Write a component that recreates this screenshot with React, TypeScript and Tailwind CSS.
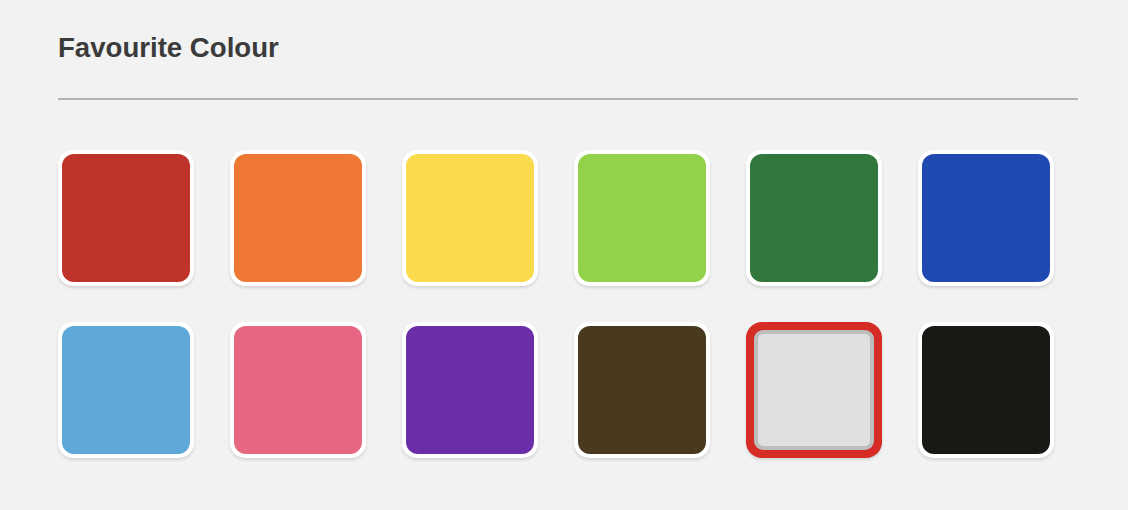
import React from 'react'

const colours = [
  '#c0332a', '#ef7834', '#fadb4e', '#92d14a', '#32783c', '#2149b2',
  '#5fa8da', '#e56781', '#6c2da8', '#49391f', '#e0e0e0', '#181915',
]

const App = () => {
  const selected = 10
  return (
    <div className="w-[1128px] h-[510px] bg-[#f2f2f2] px-[58px] pt-[30px]" style={{ fontFamily: '"Liberation Sans", Arial, sans-serif' }}>
      <h2 className="text-[27.6px] leading-[36px] font-bold text-[#3b3b3b]">Favourite Colour</h2>
      <div className="mt-[32px] h-[2px] w-[1020px] bg-[#b3b3b3]"></div>
      {/* swatches */}
      <div className="mt-[50px] grid grid-cols-[repeat(6,136px)] gap-[36px]">
        {colours.map((c, i) =>
          i === selected ? (
            <button key={c} className="w-[136px] h-[136px] rounded-[16px] bg-[#d52c26] p-[8px] shadow-[0_2px_3px_rgba(0,0,0,0.12)]">
              <div className="w-full h-full rounded-[9px] border-[4px] border-[#bdbdbd]" style={{ background: c }}></div>
            </button>
          ) : (
            <button key={c} className="w-[136px] h-[136px] rounded-[15px] bg-white p-[4px] shadow-[0_2px_3px_rgba(0,0,0,0.12)]">
              <div className="w-full h-full rounded-[12px]" style={{ background: c }}></div>
            </button>
          )
        )}
      </div>
    </div>
  )
}

export default App
